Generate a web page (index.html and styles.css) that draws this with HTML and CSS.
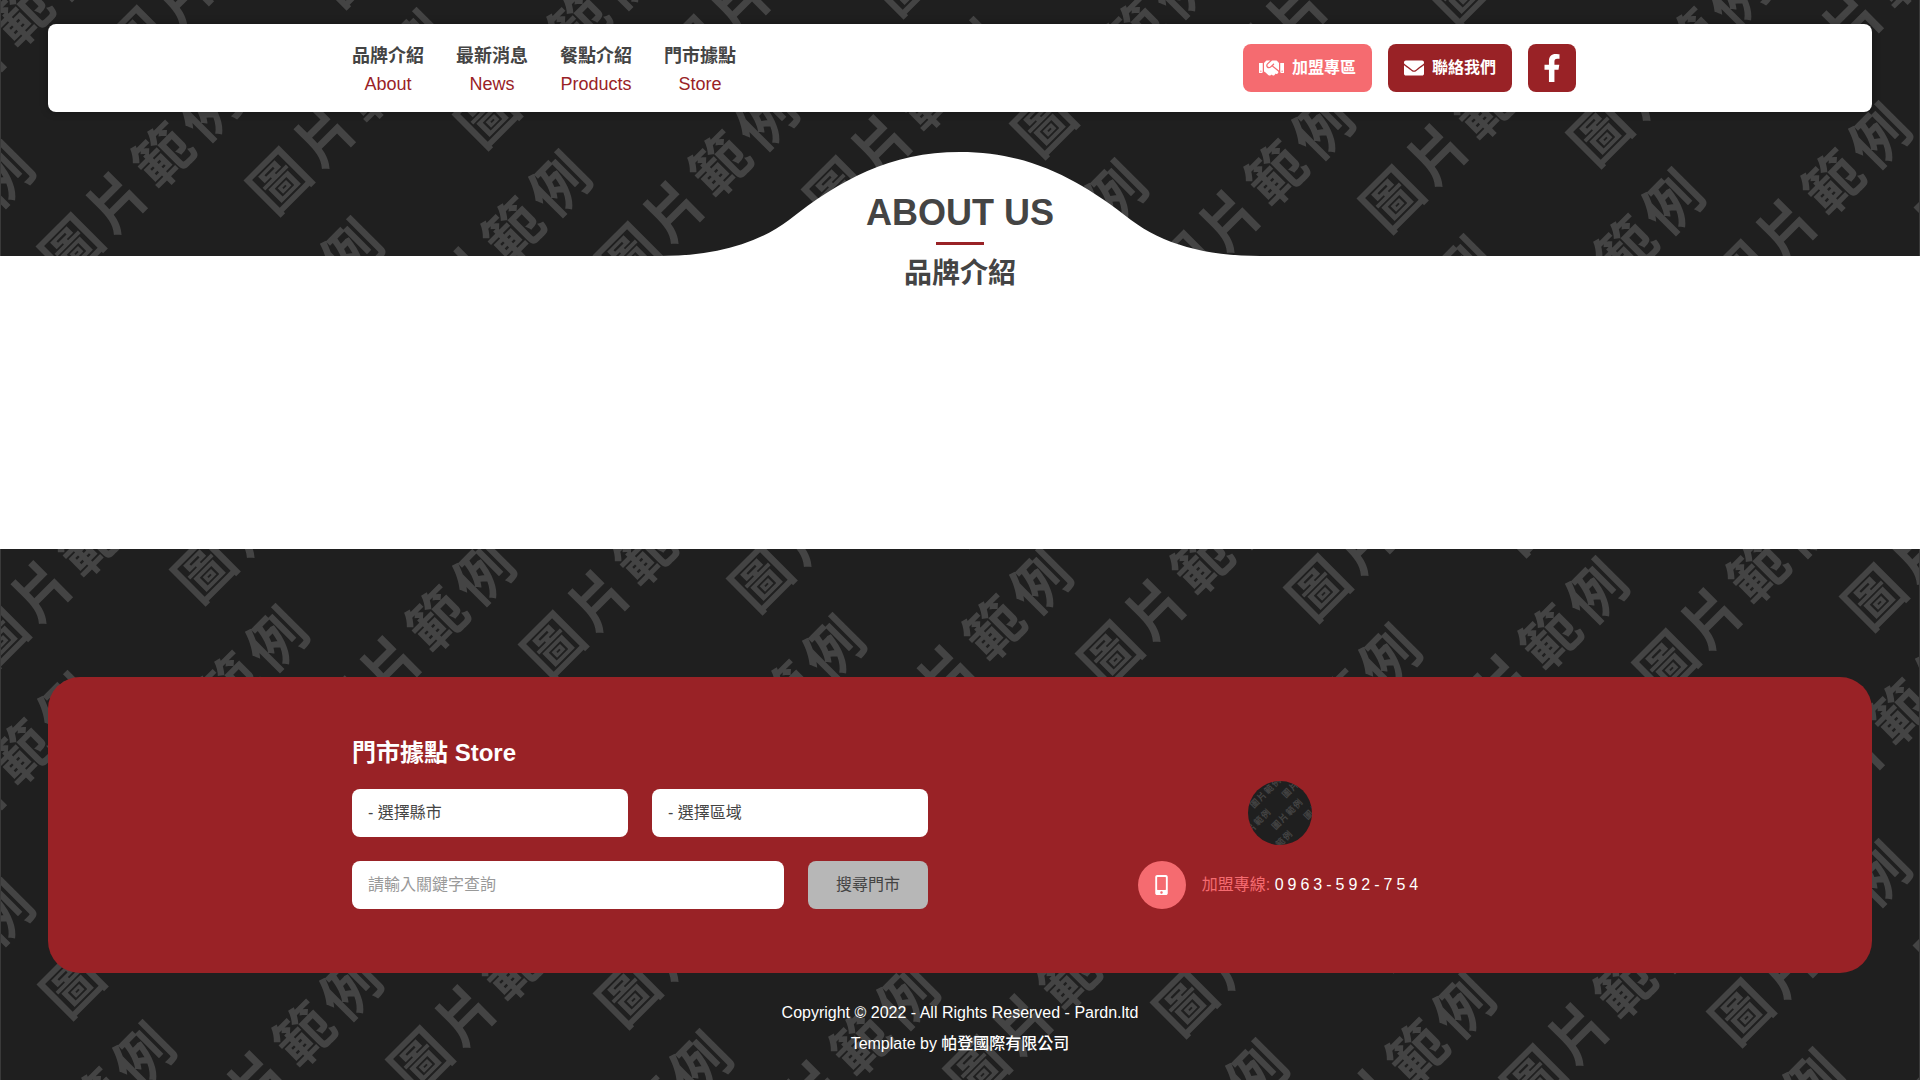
FILE: index.html
```
<!DOCTYPE html>
<html lang="zh-Hant">
<head>
<meta charset="utf-8">
<meta name="viewport" content="width=device-width, initial-scale=1">
<title>品牌介紹</title>
<link rel="stylesheet" href="styles.css">
</head>
<body>
<svg class="defs" aria-hidden="true">
  <defs>
    <g id="mark"><text class="mark" transform="rotate(-45)" x="0 65 130 195" y="22">圖片範例</text></g>
    <g id="row">
      <use href="#mark" x="-1670" y="-27"/>
      <use href="#mark" x="-1113" y="-18"/>
      <use href="#mark" x="-557" y="-9"/>
      <use href="#mark"/>
      <use href="#mark" x="557" y="9"/>
      <use href="#mark" x="1113" y="18"/>
      <use href="#mark" x="1670" y="27"/>
      <use href="#mark" x="2226" y="36"/>
      <use href="#mark" x="2783" y="45"/>
    </g>
    <g id="sheet">
      <use href="#row" x="623" y="-198"/>
      <use href="#row" x="415" y="-132"/>
      <use href="#row" x="208" y="-66"/>
      <use href="#row"/>
      <use href="#row" x="-208" y="66"/>
      <use href="#row" x="-415" y="132"/>
      <use href="#row" x="-623" y="199"/>
      <use href="#row" x="-831" y="265"/>
      <use href="#row" x="-1038" y="331"/>
      <use href="#row" x="-1246" y="397"/>
      <use href="#row" x="-1454" y="463"/>
      <use href="#row" x="-1661" y="530"/>
    </g>
  </defs>
</svg>

<header class="banner">
  <svg class="backdrop" viewBox="0 0 1920 256" preserveAspectRatio="xMidYMid slice" aria-hidden="true"><use href="#sheet" x="279" y="181"/></svg>
  <div class="topbar">
    <div class="topbar-inner">
      <nav class="menu">
        <a href="#about"><span>品牌介紹</span><em>About</em></a>
        <a href="#news"><span>最新消息</span><em>News</em></a>
        <a href="#products"><span>餐點介紹</span><em>Products</em></a>
        <a href="#store"><span>門市據點</span><em>Store</em></a>
      </nav>
      <div class="actions">
        <a class="action action-light" href="#join">
          <svg width="25" height="20" viewBox="0 0 640 512" aria-hidden="true"><path d="M434.700 64h-85.900c-8 0-15.700 3-21.600 8.400l-98.300 90c-.1.100-.2.300-.3.400-16.600 15.600-16.300 40.500-2.100 56 12.700 13.900 39.400 17.600 56.100 2.700.1-.1.300-.1.400-.2l79.900-73.200c6.500-5.900 16.700-5.500 22.600 1 6 6.500 5.500 16.600-1 22.600l-26.100 23.900L504 313.800c2.900 2.400 5.500 5 7.900 7.700V128l-54.600-54.600c-5.900-6-14.100-9.400-22.600-9.400zM544 128.200v223.900c0 17.700 14.300 32 32 32h64V128.200h-96zm48 223.900c-8.800 0-16-7.200-16-16s7.200-16 16-16 16 7.200 16 16-7.200 16-16 16zM0 384h64c17.700 0 32-14.300 32-32V128.200H0V384zm48-63.900c8.800 0 16 7.200 16 16s-7.200 16-16 16-16-7.200-16-16c0-8.900 7.200-16 16-16zm435.900 18.600L334.600 217.500l-30 27.500c-29.700 27.100-75.200 24.500-101.700-4.400-26.900-29.400-24.800-74.900 4.400-101.700L289.100 64h-83.800c-8.500 0-16.600 3.400-22.600 9.400L128 128v223.900h18.300l90.500 81.900c27.400 22.300 67.700 18.100 90-9.300l.2-.2 17.900 15.500c15.900 13 39.400 10.500 52.300-5.400l31.400-38.600 5.400 4.400c13.700 11.100 33.900 9.100 45-4.700l9.500-11.700c11.200-13.800 9.100-33.900-4.600-45.100z"/></svg>
          加盟專區
        </a>
        <a class="action" href="#contact">
          <svg width="20" height="20" viewBox="0 0 512 512" aria-hidden="true"><path d="M502.300 190.800c3.900-3.100 9.700-.2 9.700 4.700V400c0 26.500-21.500 48-48 48H48c-26.500 0-48-21.500-48-48V195.600c0-5 5.700-7.800 9.700-4.700 22.400 17.400 52.100 39.500 154.100 113.600 21.100 15.400 56.700 47.800 92.200 47.600 35.700.3 72-32.800 92.300-47.600 102-74.100 131.600-96.300 154-113.700zM256 320c23.200.4 56.600-29.200 73.400-41.400 132.700-96.300 142.800-104.700 173.400-128.700 5.800-4.500 9.200-11.500 9.200-18.900v-19c0-26.500-21.500-48-48-48H48c-26.500 0-48 21.500-48 48v19c0 7.400 3.400 14.300 9.200 18.900 30.600 23.900 40.700 32.400 173.400 128.700 16.800 12.200 50.200 41.800 73.400 41.400z"/></svg>
          聯絡我們
        </a>
        <a class="action action-square" href="#facebook" aria-label="Facebook">
          <svg width="18" height="28" viewBox="0 0 320 512" aria-hidden="true"><path d="M279.140 288l14.220-92.660h-88.910v-60.130c0-25.350 12.420-50.060 52.240-50.060h40.420V6.260S260.430 0 225.360 0c-73.220 0-121.080 44.380-121.080 124.720v70.620H22.890V288h81.390v224h100.170V288z"/></svg>
        </a>
      </div>
    </div>
  </div>
  <svg class="hill" width="640" height="104" viewBox="640 152 640 104" aria-hidden="true"><path d="M660 256C715 256 757 244 789 220C840 180 890 152 960 152S1080 180 1131 220C1163 244 1205 256 1260 256Z"/></svg>
</header>

<main class="page" id="about">
  <h1 class="title">ABOUT US</h1>
  <h2 class="subtitle">品牌介紹</h2>
</main>

<footer class="footer">
  <svg class="backdrop" viewBox="0 0 1920 531" preserveAspectRatio="xMidYMid slice" aria-hidden="true"><use href="#sheet" x="553" y="96"/></svg>
  <div class="card">
    <div class="card-inner">
      <form class="search">
        <h3>門市據點 Store</h3>
        <div class="fields">
          <select aria-label="選擇縣市"><option>- 選擇縣市</option></select>
          <select aria-label="選擇區域"><option>- 選擇區域</option></select>
        </div>
        <div class="fields">
          <input type="text" placeholder="請輸入關鍵字查詢" aria-label="請輸入關鍵字查詢">
          <button type="button">搜尋門市</button>
        </div>
      </form>
      <div class="contact">
        <svg class="logo" width="64" height="64" viewBox="0 0 418 418" aria-hidden="true"><use href="#sheet" x="185" y="286"/></svg>
        <p class="phone">
          <span class="phone-icon"><svg width="13" height="20" viewBox="0 0 320 512" aria-hidden="true"><path d="M272 0H48C21.500 0 0 21.500 0 48v416c0 26.500 21.500 48 48 48h224c26.500 0 48-21.500 48-48V48c0-26.500-21.500-48-48-48zM160 480c-17.700 0-32-14.300-32-32s14.300-32 32-32 32 14.300 32 32-14.300 32-32 32zm112-108c0 6.600-5.400 12-12 12H60c-6.600 0-12-5.400-12-12V60c0-6.600 5.400-12 12-12h200c6.600 0 12 5.400 12 12v312z"/></svg></span>
          <span>加盟專線: <a href="tel:0963592754">0963-592-754</a></span>
        </p>
      </div>
    </div>
  </div>
  <div class="legal">
    <p>Copyright © 2022 - All Rights Reserved - Pardn.ltd</p>
    <p>Template by <a href="#pardn">帕登國際有限公司</a></p>
  </div>
</footer>
</body>
</html>
```
FILE: styles.css
```
:root {
  --ink: #444;
  --red: #992226;
  --pink: #f56b70;
  --dark: #1f1f1f;
}

* { box-sizing: border-box; }

body {
  margin: 0;
  min-height: 100vh;
  display: flex;
  flex-direction: column;
  background: #fff;
  color: var(--ink);
  font: 16px/24px "Liberation Sans", "Noto Sans CJK TC", sans-serif;
}

h1, h2, h3, p { margin: 0; }
a { color: inherit; text-decoration: none; }
svg { fill: currentColor; flex: none; }

.defs { position: absolute; width: 0; height: 0; }
.mark {
  fill: #444;
  font: 700 58px "Noto Sans CJK TC", sans-serif;
  text-anchor: middle;
}

.banner, .footer {
  position: relative;
  isolation: isolate;
  background: var(--dark);
  border: solid #3a3a3a;
  border-width: 0 1px;
}
.backdrop {
  position: absolute;
  inset: 0;
  z-index: -1;
  width: 100%;
  height: 100%;
}

.banner { padding: 24px 47px 0; }
.topbar {
  padding: 16px;
  background: #fff;
  border-radius: 8px;
  box-shadow: 0 0 8px rgba(0, 0, 0, .3);
}
.topbar-inner {
  display: flex;
  justify-content: space-between;
  align-items: center;
  max-width: 1232px;
  height: 56px;
  margin: 0 auto;
}
.menu { display: flex; gap: 32px; padding: 4px 0 0 8px; }
.menu a {
  display: flex;
  flex-direction: column;
  align-items: center;
  font-size: 18px;
  line-height: 28px;
}
.menu span { font-weight: 700; }
.menu em { color: var(--red); font-style: normal; }

.actions { display: flex; gap: 16px; }
.action {
  display: flex;
  align-items: center;
  gap: 8px;
  height: 48px;
  padding: 0 16px;
  border-radius: 8px;
  background: var(--red);
  color: #fff;
  font-weight: 700;
}
.action-light { background: var(--pink); }
.action-square { width: 48px; padding: 0; justify-content: center; }

.hill { display: block; margin: 40px auto 0; color: #fff; }

.page {
  position: relative;
  flex: 1;
  margin-top: -64px;
  padding-bottom: 256px;
  text-align: center;
}
.title { font-size: 36px; line-height: 42px; }
.title::after {
  content: "";
  display: block;
  width: 48px;
  height: 3px;
  margin: 8px auto 12px;
  background: var(--red);
}
.subtitle { font-size: 28px; line-height: 34px; }

.footer { padding: 128px 47px 21px; color: #fff; }
.card { padding: 64px; border-radius: 32px; background: var(--red); }
.card-inner {
  display: grid;
  grid-template-columns: 1fr 1fr;
  gap: 64px;
  max-width: 1216px;
  margin: 0 auto;
}
.search { display: flex; flex-direction: column; gap: 24px; }
.search h3 { font-size: 24px; line-height: 24px; }
.fields { display: flex; gap: 24px; }
.fields select, .fields input, .fields button {
  appearance: none;
  flex: 1;
  min-width: 0;
  height: 48px;
  padding: 0 16px;
  border: 0;
  border-radius: 8px;
  background: #fff;
  color: var(--ink);
  font: inherit;
}
.fields input::placeholder { color: #999; }
.fields button { flex: none; width: 120px; background: #b7b7b7; }

.contact {
  display: flex;
  flex-direction: column;
  align-items: center;
  justify-content: flex-end;
  gap: 16px;
}
.logo { border-radius: 50%; background: var(--dark); }
.phone { display: flex; align-items: center; gap: 16px; color: var(--pink); }
.phone a { color: #fff; letter-spacing: 4px; }
.phone-icon {
  display: flex;
  align-items: center;
  justify-content: center;
  width: 48px;
  height: 48px;
  border-radius: 50%;
  background: var(--pink);
  color: #fff;
}

.legal { margin-top: 24px; text-align: center; line-height: 31px; }
.legal a { font-weight: 500; }
```
